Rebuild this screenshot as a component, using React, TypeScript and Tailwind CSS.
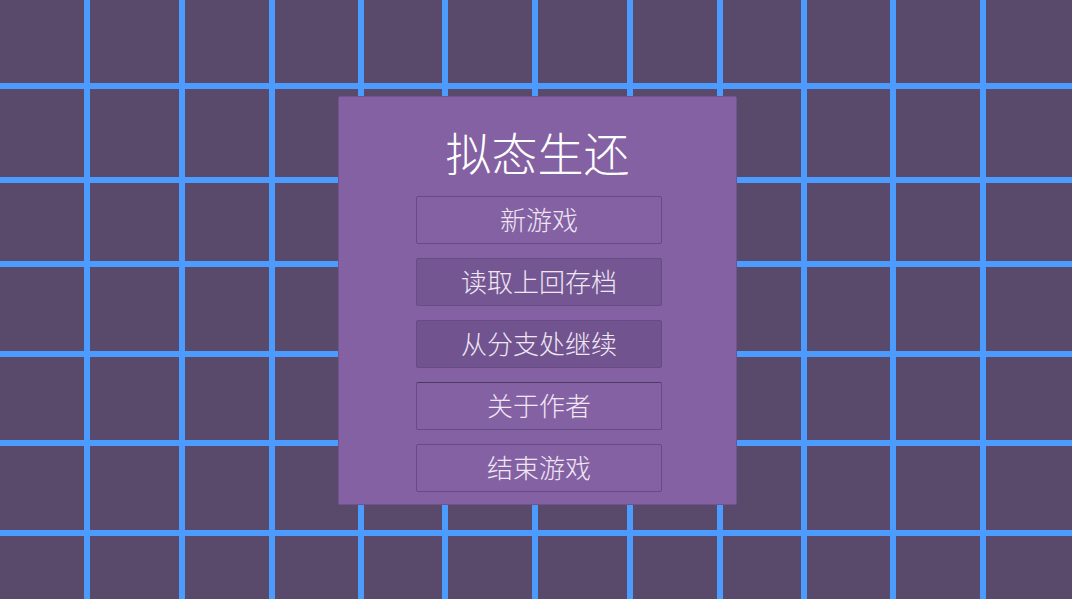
import React from "react";

// grid line offsets (px) of the backdrop
const cols = [84, 179, 269, 358, 442, 532, 627, 717, 801, 890, 980];
const rows = [83, 177, 261, 351, 440, 530];

const menu = [
  { label: "新游戏", cls: "bg-[#8461a2] border-[#664b84]" },
  { label: "读取上回存档", cls: "bg-[#745792] border-[#674c85]" },
  { label: "从分支处继续", cls: "bg-[#71548f] border-[#664b84]" },
  { label: "关于作者", cls: "bg-[#8461a2] border-[#664b84] border-t-[#4c3862]" },
  { label: "结束游戏", cls: "bg-[#8461a2] border-[#664b84]" },
];

function Grid() {
  return (
    <svg className="absolute inset-0" width="1072" height="599" viewBox="0 0 1072 599">
      {cols.map((x) => (
        <rect key={"c" + x} x={x} y={0} width={6} height={599} fill="#4c9cff" />
      ))}
      {rows.map((y) => (
        <rect key={"r" + y} x={0} y={y} width={1072} height={6} fill="#4c9cff" />
      ))}
    </svg>
  );
}

export default function App() {
  return (
    <div
      className="relative h-[599px] w-full overflow-hidden bg-[#594a6b]"
      style={{ fontFamily: '"Noto Sans CJK SC", "Noto Sans", sans-serif' }}
    >
      <Grid />
      <div className="relative flex justify-center pt-[96px] pl-[3px]">
        <div className="flex h-[409px] w-[399px] flex-col items-center rounded-[2px] border border-[#70538f] bg-[#8461a2] pt-[26px]">
          <h1 className="text-[46px] font-light leading-[56px] text-white">拟态生还</h1>
          <div className="mt-[17px] flex flex-col gap-[14px] pl-[3px]">
            {menu.map((m) => (
              <button
                key={m.label}
                className={`flex h-[48px] w-[246px] items-center justify-center rounded-[2px] border pb-[3px] text-[26px] font-light text-[#efe7f5] ${m.cls}`}
              >
                {m.label}
              </button>
            ))}
          </div>
        </div>
      </div>
    </div>
  );
}
